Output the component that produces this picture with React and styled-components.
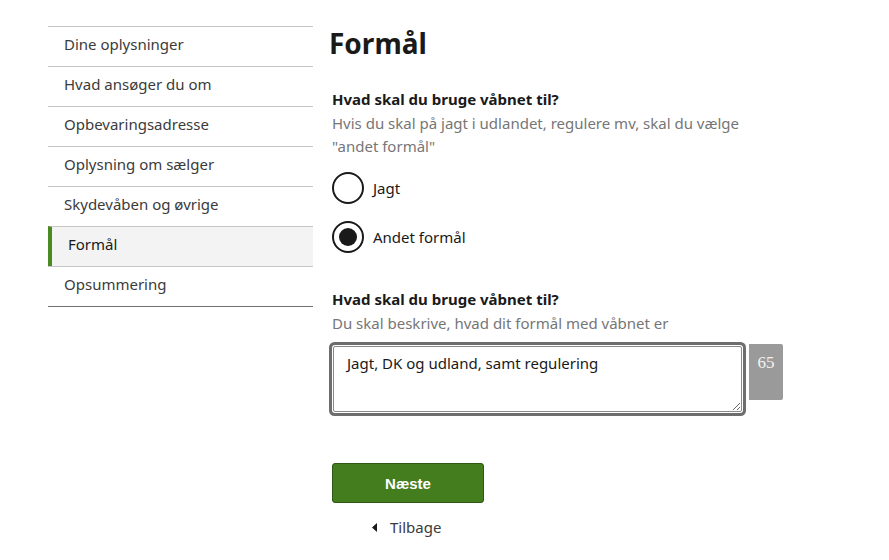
import React, { useState } from "react";
import styled, { createGlobalStyle } from "styled-components";

const GlobalStyle = createGlobalStyle`
  body {
    margin: 0;
    background: #ffffff;
    font-family: "Noto Sans", "Open Sans", Arial, sans-serif;
    color: #1a1a1a;
  }
`;

const steps = [
  "Dine oplysninger",
  "Hvad ansøger du om",
  "Opbevaringsadresse",
  "Oplysning om sælger",
  "Skydevåben og øvrige",
  "Formål",
  "Opsummering",
];

export default function App() {
  const [purpose, setPurpose] = useState("andet");
  const [text, setText] = useState("Jagt, DK og udland, samt regulering");
  const active = 5;

  return (
    <>
      <GlobalStyle />
      <Page>
        <Sidebar>
          {steps.map((step, index) => (
            <StepItem key={step} $active={index === active}>
              {step}
            </StepItem>
          ))}
        </Sidebar>

        <Main>
          <Title>Formål</Title>

          <Field $gap="27px">
            <Label>Hvad skal du bruge våbnet til?</Label>
            <Hint>
              Hvis du skal på jagt i udlandet, regulere mv, skal du vælge
              "andet formål"
            </Hint>
            <RadioList>
              <RadioRow onClick={() => setPurpose("jagt")}>
                <RadioCircle $checked={purpose === "jagt"} />
                Jagt
              </RadioRow>
              <RadioRow onClick={() => setPurpose("andet")}>
                <RadioCircle $checked={purpose === "andet"} />
                Andet formål
              </RadioRow>
            </RadioList>
          </Field>

          <Field $gap="34px">
            <Label>Hvad skal du bruge våbnet til?</Label>
            <Hint>Du skal beskrive, hvad dit formål med våbnet er</Hint>
            <TextRow>
              <TextArea
                value={text}
                onChange={(e) => setText(e.target.value)}
              />
              <Counter>{100 - text.length}</Counter>
            </TextRow>
          </Field>

          <Actions>
            <NextButton>Næste</NextButton>
            <BackLink>
              <svg width="6" height="9" viewBox="0 0 6 9">
                <path d="M5 0 L0 4.5 L5 9 Z" fill="#1a1a1a" />
              </svg>
              Tilbage
            </BackLink>
          </Actions>
        </Main>
      </Page>
    </>
  );
}

const Page = styled.div`
  display: grid;
  grid-template-columns: 265px 1fr;
  column-gap: 17px;
  padding: 26px 0 0 48px;
  width: 889px;
  box-sizing: border-box;
`;

const Sidebar = styled.nav`
  display: flex;
  flex-direction: column;
  border-top: 1px solid #c6c6c6;
  border-bottom: 1px solid #707070;
  align-self: start;
`;

const StepItem = styled.div`
  height: 39px;
  display: flex;
  align-items: center;
  padding: 0 0 5px 16px;
  box-sizing: border-box;
  font-size: 15px;
  color: ${(p) => (p.$active ? "#1a1a1a" : "#3b3b3b")};
  background: ${(p) => (p.$active ? "#f3f3f3" : "transparent")};
  border-left: ${(p) => (p.$active ? "4px solid #4b8a22" : "none")};
  & + & {
    border-top: 1px solid #c6c6c6;
    height: 40px;
  }
`;

const Main = styled.main`
  display: flex;
  flex-direction: column;
`;

const Title = styled.h1`
  margin: 0 0 0 -1px;
  font-size: 28px;
  font-weight: 700;
  line-height: 34px;
  color: #1a1a1a;
`;

const Field = styled.div`
  display: flex;
  flex-direction: column;
  padding-left: 2px;
  margin-top: ${(p) => p.$gap};
`;

const Label = styled.div`
  font-size: 15px;
  font-weight: 700;
  line-height: 25px;
  color: #1a1a1a;
`;

const Hint = styled.div`
  font-size: 15px;
  line-height: 23px;
  color: #767676;
  max-width: 430px;
`;

const RadioList = styled.div`
  display: flex;
  flex-direction: column;
  gap: 17px;
  margin-top: 14px;
`;

const RadioRow = styled.label`
  display: flex;
  align-items: center;
  gap: 9px;
  font-size: 15px;
  color: #1a1a1a;
  cursor: pointer;
`;

const RadioCircle = styled.span`
  width: 32px;
  height: 32px;
  box-sizing: border-box;
  border: 2px solid #1a1a1a;
  border-radius: 50%;
  display: flex;
  align-items: center;
  justify-content: center;
  &::after {
    content: "";
    width: 18px;
    height: 18px;
    border-radius: 50%;
    background: #1a1a1a;
    display: ${(p) => (p.$checked ? "block" : "none")};
  }
`;

const TextRow = styled.div`
  display: flex;
  align-items: flex-start;
  gap: 3px;
  margin-top: 7px;
`;

const TextArea = styled.textarea`
  width: 409px;
  height: 66px;
  margin: 4px 0 0 1px;
  padding: 6px 13px;
  box-sizing: border-box;
  resize: both;
  font-family: "Noto Sans", "Open Sans", Arial, sans-serif;
  font-size: 15px;
  color: #1a1a1a;
  border: 1px solid #8a8a8a;
  border-radius: 2px;
  box-shadow: 0 0 0 1px #ffffff, 0 0 0 4px #6e6e6e;
  outline: none;
`;

const Counter = styled.div`
  width: 34px;
  height: 56px;
  margin-top: 2px;
  margin-left: 4px;
  background: #9a9a9a;
  border-radius: 0 2px 2px 0;
  color: #f4f4f4;
  font-family: "Liberation Serif", "Times New Roman", serif;
  font-size: 17px;
  text-align: center;
  padding-top: 9px;
  box-sizing: border-box;
`;

const Actions = styled.div`
  display: flex;
  flex-direction: column;
  align-items: flex-start;
  margin-top: 51px;
  padding-left: 2px;
`;

const NextButton = styled.button`
  width: 152px;
  height: 40px;
  background: #447d1d;
  border: 1px solid #2e5712;
  border-radius: 3px;
  color: #ffffff;
  font-family: "Liberation Sans", Arial, sans-serif;
  font-size: 15px;
  font-weight: 700;
  cursor: pointer;
`;

const BackLink = styled.a`
  display: flex;
  align-items: center;
  gap: 12px;
  margin: 14px 0 0 40px;
  font-size: 15px;
  color: #3b3b3b;
  cursor: pointer;
`;
